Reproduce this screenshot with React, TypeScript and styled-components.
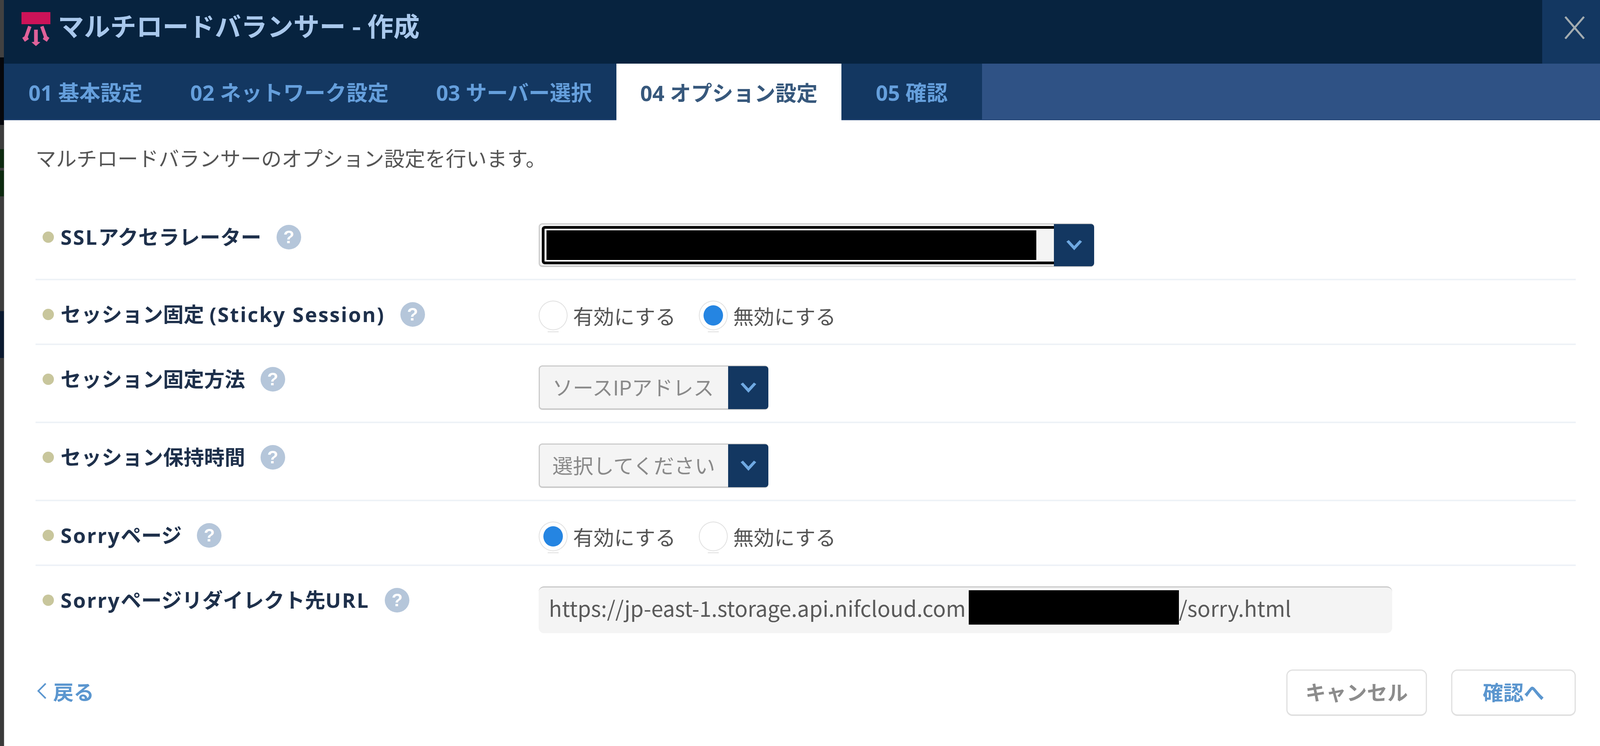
import React from 'react'
import styled, { createGlobalStyle } from 'styled-components'

const FONT = `"Open Sans", "Noto Sans CJK JP", sans-serif`
const CJK_FONT = `"Noto Sans CJK JP", "Noto Sans", sans-serif`

const GlobalStyle = createGlobalStyle`
  html, body {
    margin: 0;
    padding: 0;
    background: #fff;
  }
  * {
    box-sizing: border-box;
  }
`

const Page = styled.div`
  display: flex;
  width: 100vw;
  height: 100vh;
  overflow: hidden;
  font-family: ${FONT};
`

const BackdropStrip = styled.div`
  flex: 0 0 10px;
  background: linear-gradient(
    to bottom,
    #414141 0,
    #414141 147px,
    #05070c 147px,
    #05070c 320px,
    #3d3d3d 320px,
    #3d3d3d 382px,
    #0d2a10 382px,
    #0d2a10 430px,
    #3d3d3d 430px,
    #3d3d3d 437px,
    #0d2a10 437px,
    #0d2a10 503px,
    #3d3d3d 503px,
    #3d3d3d 797px,
    #0b1a30 797px,
    #0b1a30 917px,
    #3a3a3a 917px,
    #3a3a3a 100%
  );
`

const Modal = styled.div`
  flex: 1;
  min-width: 0;
  display: flex;
  flex-direction: column;
  background: #fff;
`

const Header = styled.header`
  display: flex;
  align-items: flex-start;
  height: 163px;
  background: #07233f;
`

const Logo = styled.svg`
  flex: none;
  width: 74px;
  height: 90px;
  margin: 31px 0 0 45px;
`

const Title = styled.h1`
  flex: 1;
  margin: 20px 0 0 19px;
  font-family: ${CJK_FONT};
  font-size: 67px;
  line-height: 88px;
  font-weight: 700;
  color: #a9c8ec;
`

const CloseButton = styled.button`
  flex: none;
  display: flex;
  align-items: center;
  justify-content: center;
  width: 148px;
  height: 163px;
  padding: 0 0 22px 18px;
  border: 0;
  background: #133761;
`

const TabBar = styled.nav`
  display: flex;
  height: 145px;
  background: #2f5285;
  border-bottom: 2px solid #254677;
`

const Tab = styled.div<{ $active?: boolean; $w: number }>`
  flex: none;
  display: flex;
  align-items: center;
  justify-content: center;
  width: ${({ $w }) => $w}px;
  height: ${({ $active }) => ($active ? '145px' : '143px')};
  font-size: 54px;
  font-weight: 700;
  white-space: nowrap;
  color: ${({ $active }) => ($active ? '#37587c' : '#659fdc')};
  background: ${({ $active }) => ($active ? '#fff' : '#133761')};
`

const Body = styled.main`
  flex: 1;
  padding: 0 62px 0 80px;
  border-left: 1px solid #b5b5b5;
`

const Intro = styled.p`
  margin: 0;
  height: 212px;
  padding-top: 62px;
  font-size: 52.5px;
  line-height: 72px;
  color: #555;
`

const Row = styled.div<{ $last?: boolean }>`
  display: flex;
  align-items: flex-start;
  padding: 52px 0 ${({ $last }) => ($last ? '0' : '30px')};
  border-bottom: ${({ $last }) => ($last ? '0' : '4px solid #eef2f7')};
`

const LabelCell = styled.div`
  flex: 0 0 1288px;
  display: flex;
  align-items: center;
  height: 70px;
  padding-left: 18px;
`

const Bullet = styled.span`
  flex: none;
  width: 29px;
  height: 29px;
  margin-right: 17px;
  border-radius: 50%;
  background: #c8c69c;
`

const Label = styled.span`
  font-size: 52.5px;
  line-height: 70px;
  font-weight: 700;
  white-space: nowrap;
  color: #1e304b;
`

const Latin = styled.span`
  letter-spacing: 3px;
`

const HelpBadge = styled.span`
  flex: none;
  display: flex;
  align-items: center;
  justify-content: center;
  width: 63px;
  height: 63px;
  margin-left: 39px;
  border-radius: 50%;
  font-family: "Liberation Sans", sans-serif;
  font-size: 46px;
  font-weight: 700;
  color: #fff;
  background: #b5c6da;
`

const SelectBox = styled.div<{ $w: number; $h: number }>`
  display: flex;
  align-items: stretch;
  width: ${({ $w }) => $w}px;
  height: ${({ $h }) => $h}px;
  border: 3px solid #ccc;
  border-bottom-width: 4px;
  border-radius: 9px;
  background: #f4f4f4;
`

const SelectText = styled.span`
  display: flex;
  align-items: center;
  padding: 0 0 6px 32px;
  font-family: ${CJK_FONT};
  font-size: 52.5px;
  white-space: nowrap;
  color: #8a8a8a;
`

const FocusField = styled.span`
  display: flex;
  align-items: center;
  width: 1311px;
  height: 98px;
  margin: 4px 0 0 5px;
  padding-left: 5px;
  border: 7px solid #000;
  border-right: 0;
  border-radius: 8px 0 0 8px;
  background: linear-gradient(to right, #fff 96.6%, #f4f4f4 96.6%);
`

const Redaction = styled.span<{ $w: number; $h: number }>`
  flex: none;
  display: block;
  width: ${({ $w }) => $w}px;
  height: ${({ $h }) => $h}px;
  background: #000;
`

const SelectArrow = styled.span`
  flex: none;
  display: flex;
  align-items: center;
  justify-content: center;
  width: 103px;
  margin: -1px -3px -2px auto;
  border-radius: 0 8px 8px 0;
  background: #133761;
`

const RadioGroup = styled.div`
  display: flex;
  align-items: flex-start;
  height: 80px;
  gap: 59px;
`

const RadioOption = styled.label`
  display: flex;
  align-items: flex-start;
  gap: 14px;
`

const RadioCircle = styled.span<{ $checked?: boolean }>`
  position: relative;
  flex: none;
  display: flex;
  align-items: center;
  justify-content: center;
  width: 74px;
  height: 76px;
  border: 2px solid #e0e0e0;
  border-radius: 50%;
  background: #fff;

  &::before {
    content: '';
    display: ${({ $checked }) => ($checked ? 'block' : 'none')};
    width: 50px;
    height: 52px;
    border-radius: 50%;
    background: #2585e2;
  }

  &::after {
    content: '';
    position: absolute;
    left: 21px;
    bottom: -7px;
    width: 28px;
    height: 2px;
    background: #dedede;
  }
`

const RadioText = styled.span`
  font-family: ${CJK_FONT};
  font-size: 52.5px;
  line-height: 76px;
  white-space: nowrap;
  color: #555;
`

const UrlInput = styled.div`
  display: flex;
  align-items: flex-start;
  width: 2185px;
  height: 120px;
  padding: 7px 0 0 26px;
  border-top: 3px solid #c9c9c9;
  border-radius: 14px;
  font-family: ${CJK_FONT};
  font-size: 55px;
  line-height: 88px;
  white-space: nowrap;
  color: #5a5a5a;
  background: #f4f4f4;
`

const UrlHead = styled.span`
  flex: none;
  width: 1075px;
`

const Footer = styled.footer`
  display: flex;
  align-items: center;
  justify-content: space-between;
  margin-top: 93px;
`

const BackLink = styled.a`
  display: flex;
  align-items: center;
  gap: 17px;
  padding: 0 0 10px 3px;
  font-family: ${CJK_FONT};
  font-size: 52.5px;
  font-weight: 700;
  color: #5b96cf;
`

const FooterActions = styled.div`
  display: flex;
  gap: 62px;
`

const FooterButton = styled.button<{ $primary?: boolean; $w: number }>`
  width: ${({ $w }) => $w}px;
  height: 119px;
  padding: 0 0 6px;
  border: 3px solid #e0e0e0;
  border-bottom-width: 4px;
  border-radius: 16px;
  font-family: ${CJK_FONT};
  font-size: 52.5px;
  font-weight: 700;
  color: ${({ $primary }) => ($primary ? '#5b96cf' : '#8c8c8c')};
  background: #fff;
`

const Chevron = () => (
  <svg width="40" height="26" viewBox="0 0 40 26">
    <path d="M0 4 L6 0 L20 15 L34 0 L40 4 L20 26 Z" fill="#6fa9e2" />
  </svg>
)

const Help = () => <HelpBadge>?</HelpBadge>

const Select = ({ text }: { text: string }) => (
  <SelectBox $w={588} $h={114}>
    <SelectText>{text}</SelectText>
    <SelectArrow>
      <Chevron />
    </SelectArrow>
  </SelectBox>
)

const Radios = ({ checked }: { checked: 'on' | 'off' }) => (
  <RadioGroup>
    <RadioOption>
      <RadioCircle $checked={checked === 'on'} />
      <RadioText>有効にする</RadioText>
    </RadioOption>
    <RadioOption>
      <RadioCircle $checked={checked === 'off'} />
      <RadioText>無効にする</RadioText>
    </RadioOption>
  </RadioGroup>
)

const Field = ({ label, last, children }: { label: React.ReactNode; last?: boolean; children: React.ReactNode }) => (
  <Row $last={last}>
    <LabelCell>
      <Bullet />
      <Label>{label}</Label>
      <Help />
    </LabelCell>
    {children}
  </Row>
)

export default function App() {
  return (
    <Page>
      <GlobalStyle />
      <BackdropStrip />
      <Modal>
        <Header>
          <Logo viewBox="0 0 78 90" preserveAspectRatio="none">
            <rect x="0" y="0" width="78" height="31" fill="#cc1358" />
            <g fill="#e0619a">
              <path d="M18 35 L27 38 L17 64 L20 69 L9 76 L2 66 L8 62 Z" />
              <path d="M59.4 35 L50.4 38 L60.4 64 L57.4 69 L68.4 76 L75.4 66 L69.4 62 Z" />
              <path d="M34 45 H44 V76 L51 77 L39 87 L27 77 L34 76 Z" />
            </g>
          </Logo>
          <Title>マルチロードバランサー - 作成</Title>
          <CloseButton aria-label="閉じる">
            <svg width="52" height="58" viewBox="0 0 52 58">
              <path d="M2 1 L50 57 M50 1 L2 57" stroke="#a3acb0" strokeWidth="5" fill="none" />
            </svg>
          </CloseButton>
        </Header>
        <TabBar>
          <Tab $w={418}>01 基本設定</Tab>
          <Tab $w={626}>02 ネットワーク設定</Tab>
          <Tab $w={524}>03 サーバー選択</Tab>
          <Tab $w={576} $active>04 オプション設定</Tab>
          <Tab $w={360}>05 確認</Tab>
        </TabBar>
        <Body>
          <Intro>マルチロードバランサーのオプション設定を行います。</Intro>
          <Field label={<><Latin>SSL</Latin>アクセラレーター</>}>
            <SelectBox $w={1422} $h={112}>
              <FocusField>
                <Redaction $w={1254} $h={76} />
              </FocusField>
              <SelectArrow>
                <Chevron />
              </SelectArrow>
            </SelectBox>
          </Field>
          <Field label={<>セッション固定 <Latin>(Sticky Session)</Latin></>}>
            <Radios checked="off" />
          </Field>
          <Field label="セッション固定方法">
            <Select text="ソースIPアドレス" />
          </Field>
          <Field label="セッション保持時間">
            <Select text="選択してください" />
          </Field>
          <Field label={<><Latin>Sorry</Latin>ページ</>}>
            <Radios checked="on" />
          </Field>
          <Field label={<><Latin>Sorry</Latin>ページリダイレクト先<Latin>URL</Latin></>} last>
            <UrlInput>
              <UrlHead>https://jp-east-1.storage.api.nifcloud.com</UrlHead>
              <Redaction $w={538} $h={88} />
              /sorry.html
            </UrlInput>
          </Field>
          <Footer>
            <BackLink>
              <svg width="25" height="42" viewBox="0 0 25 42">
                <path d="M23 2 L4 21 L23 40" stroke="#5b96cf" strokeWidth="4" fill="none" />
              </svg>
              戻る
            </BackLink>
            <FooterActions>
              <FooterButton $w={360}>キャンセル</FooterButton>
              <FooterButton $primary $w={319}>確認へ</FooterButton>
            </FooterActions>
          </Footer>
        </Body>
      </Modal>
    </Page>
  )
}
